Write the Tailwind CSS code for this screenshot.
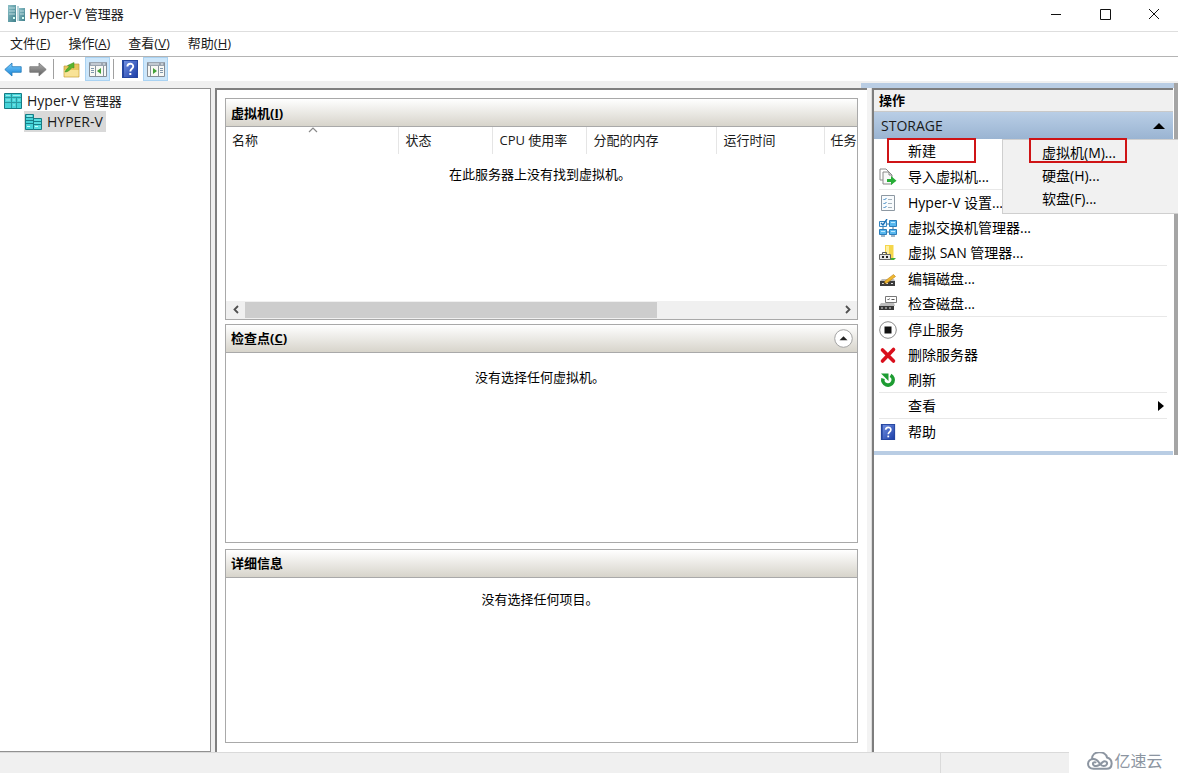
<!DOCTYPE html>
<html lang="zh-CN">
<head>
<meta charset="utf-8">
<meta name="viewport" content="width=device-width, initial-scale=1">
<title>Hyper-V 管理器</title>
<script src="https://cdn.jsdelivr.net/npm/@tailwindcss/browser@4"></script>
</head>
<body class="flex h-screen flex-col overflow-hidden bg-[#f0f0f0] font-['Open_Sans','Noto_Sans_CJK_SC',sans-serif] text-[13px] leading-5 text-[#1a1a1a]">

<svg class="absolute size-0" aria-hidden="true">
  <defs>
    <linearGradient id="teal" x1="0" y1="0" x2="1" y2="1"><stop offset="0" stop-color="#8cc0c8"/><stop offset="1" stop-color="#3f808b"/></linearGradient>
    <linearGradient id="blue" x1="0" y1="0" x2="0" y2="1"><stop offset="0" stop-color="#7fd0ff"/><stop offset="1" stop-color="#1482d6"/></linearGradient>
    <linearGradient id="grey" x1="0" y1="0" x2="0" y2="1"><stop offset="0" stop-color="#b0b0b0"/><stop offset="1" stop-color="#5e5e5e"/></linearGradient>
    <linearGradient id="help" x1="0" y1="0" x2="1" y2="1"><stop offset="0" stop-color="#6f8ee0"/><stop offset="1" stop-color="#1c3ea8"/></linearGradient>
    <symbol id="i-help" viewBox="0 0 16 18">
      <rect width="16" height="18" fill="#24459f"/><rect x="2" y="1" width="13" height="16" fill="url(#help)"/>
      <path d="M5.400 6.600C5.400 2.800 11.200 2.800 11.200 6.400C11.200 8.800 8.300 8.800 8.300 11.600" fill="none" stroke="#fff" stroke-width="1.900"/><rect x="7.300" y="13" width="2" height="2" fill="#fff"/>
    </symbol>
  </defs>
</svg>

<header class="flex h-8 shrink-0 items-center border-b border-[#dedede] bg-white pb-1 pl-2">
  <svg class="h-[17px] w-[18px]" viewBox="0 0 18 17">
    <rect width="8" height="17" fill="url(#teal)"/><path d="M1 3h6M1 6h6M1 9h6" stroke="#b9dade"/><rect x="5" y="12" width="2" height="2" fill="#d5fff4"/>
    <rect x="9" y="1" width="2" height="15" fill="#b7d5da"/>
    <rect x="11" y="3" width="6" height="13" fill="url(#teal)"/><path d="M12 6h4M12 9h4" stroke="#b9dade"/><rect x="14" y="12" width="2" height="2" fill="#d5fff4"/>
  </svg>
  <h1 class="ml-[3px] flex-1"><span class="text-sm leading-5">Hyper-V</span> 管理器</h1>
  <div class="flex">
    <button type="button" aria-label="最小化" class="grid h-7 w-[49px] place-items-center"><svg class="size-3" viewBox="0 0 12 12"><path d="M1 6.500h10" stroke="#111"/></svg></button>
    <button type="button" aria-label="最大化" class="grid h-7 w-[49px] place-items-center"><svg class="size-3" viewBox="0 0 12 12"><path d="M1.500 1.500h10v10h-10z" fill="none" stroke="#111"/></svg></button>
    <button type="button" aria-label="关闭" class="grid h-7 w-[49px] place-items-center"><svg class="size-3" viewBox="0 0 12 12"><path d="M1 1l10 10M11 1L1 11" stroke="#111"/></svg></button>
  </div>
</header>

<nav class="flex h-[25px] shrink-0 items-center gap-[18px] border-b border-[#b4b4b4] bg-white pb-[2px] pl-[10px]" aria-label="菜单">
  <button type="button">文件(<u>F</u>)</button>
  <button type="button">操作(<u>A</u>)</button>
  <button type="button">查看(<u>V</u>)</button>
  <button type="button">帮助(<u>H</u>)</button>
</nav>

<div class="flex h-6 shrink-0 items-center bg-white pl-1" role="toolbar" aria-label="工具栏">
  <button type="button" aria-label="后退"><svg class="h-[15px] w-[18px]" viewBox="0 0 18 15"><path d="M.8 7.500L8 1v3.700h9.200v5.600H8V14z" fill="url(#blue)" stroke="#2379b8" stroke-width=".8"/></svg></button>
  <button type="button" aria-label="前进" class="ml-[7px]"><svg class="h-[15px] w-[18px]" viewBox="0 0 18 15"><path d="M17.200 7.500L10 1v3.700H.8v5.600H10V14z" fill="url(#grey)" stroke="#777" stroke-width=".8"/></svg></button>
  <span class="ml-[6px] h-5 w-px bg-[#a0a0a0]"></span>
  <button type="button" aria-label="上一级" class="ml-[9px]"><svg class="h-[17px] w-[17px]" viewBox="0 0 17 17"><path d="M1 5h6l2-2h7v13H1z" fill="#e8c65c" stroke="#c29b3c" stroke-width=".7"/><path d="M1.500 9h14v6.500h-14z" fill="#f9e397"/><path d="M2 11C3 8 5 7 6.500 5.500L4.500 4.500L11 1.500L11 7L9 6.500C7 9 5 11 2 11z" fill="#58b52e" stroke="#3f8b22" stroke-width=".5"/></svg></button>
  <button type="button" aria-label="显示控制台树" aria-pressed="true" class="ml-[5px] grid h-6 w-[25px] place-items-center border border-[#a9d2f2] bg-[#cce6fa]"><svg class="h-4 w-[18px]" viewBox="0 0 18 16"><path d="M.5 1.500h17v14H.5z" fill="#f8f8f4" stroke="#858d96"/><path d="M1 1h16v4H1z" fill="#9ba5b0"/><path d="M2 3h10M14 3h2" stroke="#e9eef2"/><path d="M6.500 5v10M14.500 5v10" stroke="#88929c"/><path d="M2 7.500h3M2 9.500h3M2 11.500h3" stroke="#8197ac"/><path d="M12 7v6L8 10z" fill="#42a136"/></svg></button>
  <span class="ml-[3px] h-5 w-px bg-[#a0a0a0]"></span>
  <button type="button" aria-label="帮助" class="ml-2"><svg class="h-[18px] w-4"><use href="#i-help"/></svg></button>
  <button type="button" aria-label="显示操作窗格" aria-pressed="true" class="ml-[5px] grid h-6 w-[25px] place-items-center border border-[#a9d2f2] bg-[#cce6fa]"><svg class="h-4 w-[18px]" viewBox="0 0 18 16"><path d="M.5 1.500h17v14H.5z" fill="#f8f8f4" stroke="#858d96"/><path d="M1 1h16v4H1z" fill="#9ba5b0"/><path d="M2 3h10M14 3h2" stroke="#e9eef2"/><path d="M3.500 5v10M11.500 5v10" stroke="#88929c"/><path d="M13 7.500h3M13 9.500h3M13 11.500h3" stroke="#8197ac"/><path d="M6 7v6L10 10z" fill="#42a136"/></svg></button>
</div>

<div class="flex h-[7px] shrink-0 items-end">
  <div class="flex-1"></div>
  <div class="h-[5px] w-[313px] bg-[#b9cde4]"></div>
  <div class="h-[5px] w-1 bg-[#a5a5a5]"></div>
</div>

<main class="flex min-h-0 flex-1">
  <aside class="w-[211px] shrink-0 border-t border-r border-b border-[#919191] bg-white pt-px pl-1">
    <ul>
      <li>
        <a href="#" class="flex h-[21px] items-center gap-[5px]"><svg class="size-[18px]" viewBox="0 0 18 18"><path d="M.5 1.500h17v15H.5z" fill="#45d3d8" stroke="#157c85"/><path d="M1 5.500h16M7.500 2v14M1 10.500h16M12.500 6v10" stroke="#2a9aa2"/><path d="M2 3.500h4M9 3.500h7M2 8h4M9 8h2M14 8h2M9 13h2" stroke="#9cecec"/></svg><span><span class="text-sm leading-5">Hyper-V</span> 管理器</span></a>
        <ul class="pl-5">
          <li><a href="#" class="inline-flex h-[21px] items-center gap-[5px] bg-[#d9d9d9] pr-[3px]"><svg class="h-[18px] w-[18px]" viewBox="0 0 18 18"><path d="M1.500 1.500h8v15h-8z" fill="#45d3d8" stroke="#157c85"/><path d="M2 4.500h7M2 7.500h7M2 10.500h7" stroke="#187f88"/><path d="M9.500 5.500h8v11h-8z" fill="#56dde0" stroke="#157c85"/><path d="M10 8.500h7M10 11.500h7" stroke="#187f88"/><path d="M3 13.500h3M11 13.500h3M3 3h5" stroke="#c9fffb"/></svg><span class="text-sm leading-5">HYPER-V</span></a></li>
        </ul>
      </li>
    </ul>
  </aside>

  <div class="ml-1 flex min-w-0 flex-1 flex-col border-t-2 border-l-2 border-[#808080] bg-white pt-2 pr-[9px] pb-[9px] pl-2">
    <section class="flex min-h-0 flex-[222] basis-0 flex-col border border-[#a9a9a9]">
      <h2 class="flex h-7 shrink-0 items-center border-b border-[#a9a9a9] bg-linear-to-b from-white to-[#d7d4cb] pl-[5px] font-bold text-black"><span>虚拟机(<u>I</u>)</span></h2>
      <div class="relative min-h-0 flex-1 overflow-hidden">
        <table class="w-full table-fixed border-collapse text-left">
          <thead>
            <tr class="h-[27px]">
              <th scope="col" class="w-[172px] border-r border-[#e5e5e5] pb-[2px] pl-[6px] font-normal">名称</th>
              <th scope="col" class="w-[94px] border-r border-[#e5e5e5] pb-[2px] pl-[7px] font-normal">状态</th>
              <th scope="col" class="w-[94px] border-r border-[#e5e5e5] pb-[2px] pl-[7px] font-normal whitespace-nowrap">CPU 使用率</th>
              <th scope="col" class="w-[130px] border-r border-[#e5e5e5] pb-[2px] pl-[7px] font-normal">分配的内存</th>
              <th scope="col" class="w-[108px] border-r border-[#e5e5e5] pb-[2px] pl-[7px] font-normal">运行时间</th>
              <th scope="col" class="pb-[2px] pl-[6px] font-normal whitespace-nowrap">任务</th>
            </tr>
          </thead>
        </table>
        <svg class="absolute top-0 left-[82px] h-[6px] w-[10px]" viewBox="0 0 10 6"><path d="M1 5l4-4 4 4" fill="none" stroke="#8a8a8a" stroke-width="1.200"/></svg>
        <p class="mt-[10px] pr-[3px] text-center text-black">在此服务器上没有找到虚拟机。</p>
      </div>
      <div class="flex h-[18px] shrink-0 items-center bg-[#f0f0f0]">
        <button type="button" aria-label="向左滚动" class="grid h-4 w-[19px] place-items-center"><svg class="h-[9px] w-[6px]" viewBox="0 0 6 9"><path d="M5 1L1.500 4.500L5 8" fill="none" stroke="#505050" stroke-width="1.800"/></svg></button>
        <div class="h-4 flex-1"><div class="h-4 w-[69.500%] bg-[#cdcdcd]"></div></div>
        <button type="button" aria-label="向右滚动" class="grid h-4 w-[19px] place-items-center"><svg class="h-[9px] w-[6px]" viewBox="0 0 6 9"><path d="M1 1l3.500 3.500L1 8" fill="none" stroke="#505050" stroke-width="1.800"/></svg></button>
      </div>
    </section>

    <section class="mt-1 flex min-h-0 flex-[219] basis-0 flex-col border border-[#a9a9a9]">
      <div class="flex h-7 shrink-0 items-center justify-between border-b border-[#a9a9a9] bg-linear-to-b from-white to-[#d7d4cb] pr-1 pl-[5px]">
        <h2 class="font-bold text-black">检查点(<u>C</u>)</h2>
        <button type="button" aria-label="折叠"><svg class="size-[19px]" viewBox="0 0 19 19"><circle cx="9.500" cy="9.500" r="8.800" fill="#fff" stroke="#a3a3a3"/><path d="M5.500 11.300L9.500 7.300l4 4z" fill="#222"/></svg></button>
      </div>
      <p class="mt-[14px] pr-[3px] text-center text-black">没有选择任何虚拟机。</p>
    </section>

    <section class="mt-[6px] flex min-h-0 flex-[194] basis-0 flex-col border border-[#a9a9a9]">
      <h2 class="flex h-7 shrink-0 items-center border-b border-[#a9a9a9] bg-linear-to-b from-white to-[#d7d4cb] pl-[5px] font-bold text-black">详细信息</h2>
      <p class="mt-[11px] pr-[3px] text-center text-black">没有选择任何项目。</p>
    </section>
  </div>

  <div class="w-[5px] shrink-0 border-r border-[#dcdcdc] bg-[#f3f3f3]"></div>

  <aside class="relative flex w-[306px] shrink-0 items-start border-l-2 border-[#7d7d7d] bg-white" aria-label="操作">
    <div class="min-w-0 flex-1 border-t-2 border-[#7d7d7d]">
      <h2 class="flex h-[22px] items-center border-b border-[#c9c9c9] bg-[#f0f0f0] pb-[2px] pl-[5px] font-bold text-black">操作</h2>
      <button type="button" class="flex h-[27px] w-full items-center justify-between bg-linear-to-b from-[#b9cee6] to-[#9ab4d2] pr-2 pl-[7px] text-sm leading-5"><span>STORAGE</span><svg class="h-[6px] w-3" viewBox="0 0 12 6"><path d="M0 6l6-6 6 6z" fill="#000"/></svg></button>
      <div class="mr-[6px] ml-[5px] text-sm leading-5 text-black">
        <button type="button" class="flex h-[25px] w-full items-center pb-[2px] pl-[29px]">新建</button>
        <button type="button" class="flex h-[25px] w-full items-center gap-[11px]"><svg class="size-[18px]" viewBox="0 0 18 18"><path d="M1 1h6l3 3v8H1z" fill="#fff" stroke="#888"/><path d="M4 4h6l3 3v9H4z" fill="#f8f8f8" stroke="#888"/><path d="M10 4v3h3" fill="none" stroke="#888"/><path d="M8 11h4V8l5.500 4.700L12 17v-3H8z" fill="#27ae36"/></svg><span>导入虚拟机...</span></button>
        <hr class="border-[#e8e8e8]">
        <button type="button" class="flex h-[25px] w-full items-center gap-[11px]"><svg class="size-[18px]" viewBox="0 0 18 18"><path d="M2.500 1.500h13v15h-13z" fill="#f8fbfd" stroke="#8d98a2"/><path d="M4.500 5l1 1 2-2M4.500 9l1 1 2-2M4.500 13l1 1 2-2" fill="none" stroke="#3a86c3"/><path d="M9 5.500h4M9 9.500h4M9 13.500h4" stroke="#a5b2bb"/></svg><span>Hyper-V 设置...</span></button>
        <button type="button" class="flex h-[25px] w-full items-center gap-[11px]"><svg class="size-[18px]" viewBox="0 0 18 18"><path d="M.5 2.500h7v5h-7z" fill="#e4f3ff" stroke="#3486c2"/><path d="M2 4l2 2L8 0" fill="none" stroke="#1c6fb3" stroke-width="1.400"/><path d="M10.500 1.500h7v6h-7zM.5 10.500h7v5h-7zM10.500 10.500h7v5h-7z" fill="#58b7ee" stroke="#2a7dbb"/><path d="M12 3.500h4M2 12.500h4M12 12.500h4" stroke="#bde8ff"/><path d="M8 5h2M8 13h2M4 8v2M14 8v2M2 17h4M12 17h4" stroke="#446f90"/></svg><span>虚拟交换机管理器...</span></button>
        <button type="button" class="flex h-[25px] w-full items-center gap-[11px]"><svg class="size-[18px]" viewBox="0 0 18 18"><path d="M6 1h8.500v13H6z" fill="#f5d64b"/><path d="M7 2h3v10H7z" fill="#fff0a0"/><path d="M11 14h6l-2 2h-4z" fill="#42ad36"/><path d="M3.500 10V8.500h4V10" fill="none" stroke="#555"/><path d="M.5 10.500h11v5H.5z" fill="#e6e6e6" stroke="#666"/><path d="M3 13h2M7 13h2" stroke="#222" stroke-width="2"/></svg><span>虚拟 SAN 管理器...</span></button>
        <hr class="border-[#e8e8e8]">
        <button type="button" class="flex h-[25px] w-full items-center gap-[11px]"><svg class="size-[18px]" viewBox="0 0 18 18"><path d="M3 9h12l1 2H1z" fill="#bcbcbc"/><path d="M1 11h15v5H1z" fill="#3c3c3c"/><path d="M3 13.500h2M7 13.500h2M12 13.500h2" stroke="#ddd"/><path d="M5 14l1-3 8.500-6.500 2 2L8 13z" fill="#f0b72d" stroke="#b9821c" stroke-width=".6"/><path d="M5 14l.5-1.800 1.500 1z" fill="#222"/></svg><span>编辑磁盘...</span></button>
        <button type="button" class="flex h-[25px] w-full items-center gap-[11px]"><svg class="size-[18px]" viewBox="0 0 18 18"><path d="M2 8h13l1 3H0z" fill="#bcbcbc"/><path d="M0 11h15v4H0z" fill="#383838"/><path d="M2 13h2M6 13h2M10 13h2" stroke="#ddd"/><path d="M6.500 1.500h11v6h-11z" fill="#fff" stroke="#777"/><path d="M8.500 4l1 1 1-1.500M12.500 4.500h3" fill="none" stroke="#555"/></svg><span>检查磁盘...</span></button>
        <hr class="border-[#e8e8e8]">
        <button type="button" class="flex h-[25px] w-full items-center gap-[11px]"><svg class="size-[18px]" viewBox="0 0 18 18"><circle cx="9" cy="9" r="8.300" fill="#fff" stroke="#8b8b8b"/><path d="M5.500 5.500h7v7h-7z" fill="#111"/></svg><span>停止服务</span></button>
        <button type="button" class="flex h-[25px] w-full items-center gap-[11px]"><svg class="size-[18px]" viewBox="0 0 18 18"><path d="M3.500 4l11 11M14.500 3.500l-11 11.500" stroke="#d90f1c" stroke-width="3.600" stroke-linecap="round"/></svg><span>删除服务器</span></button>
        <button type="button" class="flex h-[25px] w-full items-center gap-[11px]"><svg class="size-[18px]" viewBox="0 0 18 18"><path d="M11.500 4.300A5.200 5.200 0 1 1 4 7.500" fill="none" stroke="#1d9c32" stroke-width="3.600"/><path d="M2 2.500h7.500v7.500z" fill="#1d9c32"/></svg><span>刷新</span></button>
        <hr class="border-[#e8e8e8]">
        <button type="button" class="flex h-[25px] w-full items-center justify-between pr-[3px] pl-[29px]"><span>查看</span><svg class="h-[10px] w-[6px]" viewBox="0 0 6 10"><path d="M0 0l6 5-6 5z" fill="#000"/></svg></button>
        <hr class="border-[#e8e8e8]">
        <button type="button" class="flex h-[26px] w-full items-center gap-[11px]"><svg class="h-4 w-[18px]"><use href="#i-help"/></svg><span>帮助</span></button>
      </div>
      <div class="mt-[6px] h-1 bg-[#b9cde4]"></div>
    </div>
    <div class="ml-px h-[367px] w-1 shrink-0 bg-[#a5a5a5]"></div>

    <!-- 新建子菜单 -->
    <div class="absolute top-[51px] right-0 w-[176px] border border-r-0 border-[#cfcfcf] bg-[#f1f1f1] pt-px pb-[3px] text-sm leading-5 text-black" role="menu">
      <button type="button" role="menuitem" class="flex h-[23px] w-full items-center pl-[39px]">虚拟机(M)...</button>
      <button type="button" role="menuitem" class="flex h-[23px] w-full items-center pl-[39px]">硬盘(H)...</button>
      <button type="button" role="menuitem" class="flex h-[23px] w-full items-center pl-[39px]">软盘(F)...</button>
    </div>
    <!-- 红色标注框 -->
    <div class="pointer-events-none absolute top-[50px] left-[13px] h-[25px] w-[89px] border-2 border-[#cf1416]"></div>
    <div class="pointer-events-none absolute top-[50px] right-[51px] h-[25px] w-[98px] border-2 border-[#cf1416]"></div>
  </aside>
</main>

<footer class="flex h-[21px] shrink-0">
  <div class="flex-1 border-t border-[#dadada]"></div>
  <div class="w-[129px] border-t border-l border-[#dadada]"></div>
  <div class="flex w-[109px] items-center justify-center gap-px bg-white pr-[2px] pb-1 pl-[5px] text-base leading-5 text-[#8c95a1]">
    <svg class="h-[19px] w-[26px]" viewBox="0 0 26 19" fill="none" stroke="#8c95a1" stroke-width="2"><path d="M5 8C5-.8 18.500-.8 20 6.500C26.500 8.500 26 17.800 19.500 17.800H6.500C-1 17.800-.5 8 6.500 8C11 8 11 11 13 13C15 15.500 18.500 15.500 19.700 13.500C21 11 18 9 15.500 11.300C13 14 10 16.500 6.700 14.300C4.500 12 7.500 10 9 12"/></svg>
    <span>亿速云</span>
  </div>
</footer>
</body>
</html>
